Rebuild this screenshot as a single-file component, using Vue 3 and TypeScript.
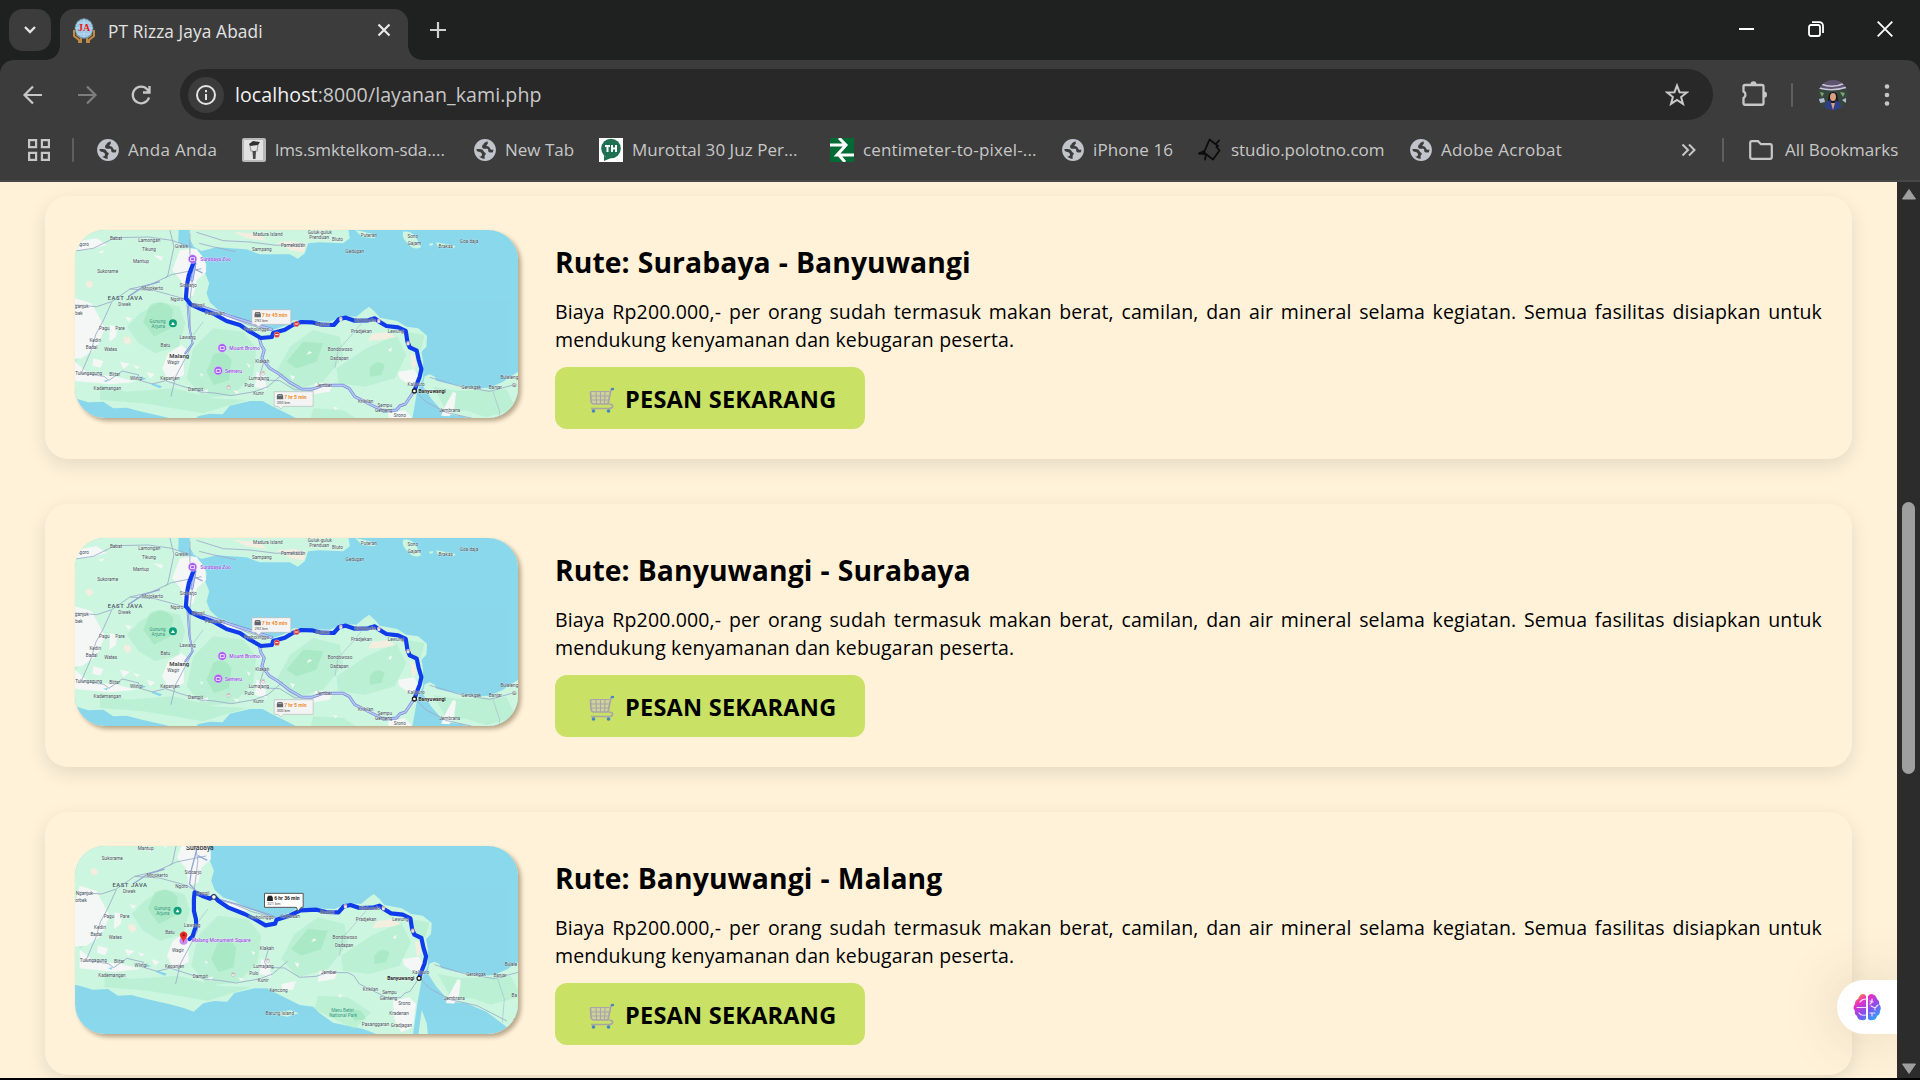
<script setup lang="ts">
interface Bookmark {
  icon: 'globe' | 'lms' | 'th' | 'cm' | 'polotno'
  label: string
  width: number
  spacing: number
}
type Label = [number, number, string, string?]

const bookmarks: Bookmark[] = [
  { icon: 'globe', label: 'Anda Anda', width: 145, spacing: 0.3 },
  { icon: 'lms', label: 'lms.smktelkom-sda....', width: 232, spacing: -0.08 },
  { icon: 'globe', label: 'New Tab', width: 125, spacing: 0 },
  { icon: 'th', label: 'Murottal 30 Juz Per...', width: 231, spacing: 0.05 },
  { icon: 'cm', label: 'centimeter-to-pixel-...', width: 232, spacing: 0.17 },
  { icon: 'globe', label: 'iPhone 16', width: 136, spacing: 0.12 },
  { icon: 'polotno', label: 'studio.polotno.com', width: 212, spacing: -0.06 },
  { icon: 'globe', label: 'Adobe Acrobat', width: 160, spacing: 0.26 },
]

const routes = [
  { title: 'Rute: Surabaya - Banyuwangi', malang: false },
  { title: 'Rute: Banyuwangi - Surabaya', malang: false },
  { title: 'Rute: Banyuwangi - Malang', malang: true },
]

// Town names shared by both map crops, in map units.
const towns: Label[] = [
  [243, 143, 'Mantup'], [143, 174, 'Sukorame'], [278, 224, 'Mojokerto'],
  [385, 215, 'Sidoarjo'], [351, 258, 'Ngoro'], [194, 272, 'Diwek'],
  [133, 346, 'Pagu'], [180, 346, 'Pare'], [106, 381, 'Kediri'], [95, 401, 'Badal'], [152, 409, 'Wates'],
  [383, 373, 'Lawang'], [316, 395, 'Batu'], [340, 448, 'Wagir'], [86, 480, 'Tulungagung'], [164, 482, 'Blitar'],
  [229, 495, 'Wlingi'], [330, 496, 'Kepanjen'], [142, 524, 'Kademangan'], [407, 528, 'Dampit'],
  [607, 443, 'Klakah'], [597, 496, 'Lumajang'], [568, 517, 'Pulo'], [596, 540, 'Kunir'],
  [415, 277, 'Bangil'], [590, 349, 'Probolinggo'], [788, 334, 'Besuki'], [915, 322, 'Situbondo'],
  [905, 355, 'Pradjekan'], [1008, 355, 'Lewung'], [841, 409, 'Bondowoso'], [839, 434, 'Dadapan'],
  [793, 515, 'Jember'], [918, 565, 'Krikilan'], [975, 575, 'Sempu'], [972, 592, 'Genteng'], [1020, 607, 'Srono'],
  [1069, 514, 'Kalipuro'], [1235, 521, 'Gerokgak'], [1307, 523, 'Banjar'],
  [1170, 592, 'Jembrana'],
]
const northTowns: Label[] = [
  [168, 75, 'Babat'], [268, 80, 'Lamongan'], [69, 93, 'ngoro'], [267, 107, 'Tikung'], [365, 100, 'Gresik'],
  [624, 64, 'Madura Island'], [606, 108, 'Sampang'], [700, 96, 'Pamekasan'], [780, 56, 'Guluk-guluk'],
  [778, 73, 'Prenduan'], [833, 79, 'Bluto'], [927, 65, 'Puteran'], [885, 114, 'Gedugan'], [1059, 70, 'Sono'],
  [1064, 90, 'Gajam'], [1158, 98, 'Brakas'], [1228, 83, 'Goa-daja'], [465, 299, 'Pasuruan'], [1364, 517, 'Gi'],
  [65, 280, 'ganjuk'], [57, 299, 'bek'], [1349, 492, 'Buleleng'],
]
const southTowns: Label[] = [
  [646, 638, 'Barung Island'], [1004, 637, 'Kradenan'], [933, 670, 'Pasanggaran'], [1011, 675, 'Gradjagan'],
  [677, 346, 'Kraksaan'], [1350, 583, 'Ba'], [1350, 663, 'T'], [642, 568, 'Kencong'],
  [59, 279, 'Nganjuk'], [49, 299, 'orbek'], [1340, 492, 'Bulele'],
]

const coastRoute =
  'M378 250 L392 268 L425 283 L465 298 L500 318 L540 330 L570 350 L603 369 L636 366 L640 354 L675 344 L700 329 L724 321 L756 322 L785 329 L822 330 L838 312 L858 308 L885 317 L925 316 L945 310 L958 320 L980 333 L1015 337 L1038 348 L1043 380 L1050 397 L1071 407 L1077 435 L1085 462 L1080 485 L1074 500 L1064 527'
const malangRoute =
  'M375 410 L384 402 L389 386 L395 370 L394 350 L388 325 L388 290 L390 270 L412 280 L437 289 L448 281 L462 296 L490 315 L540 335 L570 350 L603 369 L632 364 L636 352 L675 340 L708 324 L756 322 L785 329 L822 330 L838 312 L858 308 L885 317 L925 316 L945 310 L958 320 L980 333 L1015 337 L1038 348 L1043 380 L1050 397 L1071 407 L1077 435 L1085 462 L1080 485 L1074 500 L1064 527'
const southAlternative =
  'M598 368 L604 390 L613 405 L606 430 L630 460 L655 475 L690 502 L725 522 L755 523 L790 511 L850 511 L868 520 L885 545 L935 570 L973 589 L1010 585 L1020 573 L1037 567 L1064 527'
</script>

<template>
  <div class="window">
    <header class="tabstrip">
      <button class="tab-search">
        <svg width="14" height="10" viewBox="0 0 14 10"><path d="M2 2l5 5 5-5" fill="none" stroke="#e3e3e3" stroke-width="2.4" /></svg>
      </button>
      <div class="tab">
        <svg class="favicon" width="24" height="26" viewBox="0 0 24 26">
          <path d="M2 12v6l5 4v3M22 12v6l-5 4v3M4 16l5 4v5M20 16l-5 4v5" fill="none" stroke="#c08a45" stroke-width="2" />
          <ellipse cx="12" cy="10.500" rx="9" ry="9.800" fill="#9cc8e6" stroke="#6a8798" />
          <path d="M3 10h18M5 5h14M5 16h14M12 1v18" stroke="#c9e2f2" stroke-width=".7" />
          <text x="12" y="13" text-anchor="middle" class="fav-text">JA</text>
        </svg>
        <span class="tab-title">PT Rizza Jaya Abadi</span>
        <svg class="tab-close" width="14" height="14" viewBox="0 0 14 14"><path d="M1.500 1.500l11 11M12.500 1.500l-11 11" stroke="#e8e8e8" stroke-width="2.200" /></svg>
      </div>
      <svg class="new-tab" width="18" height="18" viewBox="0 0 18 18"><path d="M9 1v16M1 9h16" stroke="#d0d0d0" stroke-width="2.200" /></svg>
      <div class="controls">
        <svg width="16" height="16" viewBox="0 0 16 16"><path d="M0 8h15" stroke="#fff" stroke-width="2" /></svg>
        <svg width="16" height="16" viewBox="0 0 16 16" fill="none" stroke="#fff" stroke-width="1.800"><rect x="1" y="4" width="11" height="11" rx="2" /><path d="M4 1.200h7.500a3.500 3.500 0 013.500 3.500V12" /></svg>
        <svg width="16" height="16" viewBox="0 0 16 16"><path d="M.7.7l14.600 14.600M15.300.7L.7 15.300" stroke="#fff" stroke-width="1.800" /></svg>
      </div>
    </header>

    <div class="chrome-body">
      <div class="toolbar">
        <svg class="nav" width="24" height="24" viewBox="0 0 24 24" fill="none" stroke="#c7c7c7" stroke-width="2.200"><path d="M21 12H4M12 3.500L3.500 12l8.500 8.500" /></svg>
        <svg class="nav" width="24" height="24" viewBox="0 0 24 24" fill="none" stroke="#7d7d7d" stroke-width="2.200"><path d="M3 12h17M12 3.500l8.500 8.500-8.500 8.500" /></svg>
        <svg class="nav" width="24" height="24" viewBox="0 0 24 24" fill="none" stroke="#c7c7c7" stroke-width="2.300"><path d="M20 14.500A8.300 8.300 0 1118.300 6.500L20.500 9M20.500 3v6.500H14" /></svg>
        <div class="omnibox">
          <span class="info">
            <svg width="22" height="22" viewBox="0 0 22 22"><circle cx="11" cy="11" r="9" fill="none" stroke="#e3e3e3" stroke-width="2" /><path d="M11 10v6M11 6v2.200" stroke="#e3e3e3" stroke-width="2" /></svg>
          </span>
          <span class="url"><b>localhost</b>:8000/layanan_kami.php</span>
          <svg class="star" width="24" height="24" viewBox="0 0 24 24"><path d="M12 2.500l2.500 6.700 7.200.3-5.600 4.500 1.900 6.900-6-4-6 4L7.900 14 2.300 9.500l7.200-.3z" fill="none" stroke="#c9c9c9" stroke-width="2" /></svg>
        </div>
        <svg class="ext" width="28" height="30" viewBox="0 0 28 28" preserveAspectRatio="none"><path d="M5 6.500h17a1.500 1.500 0 011.500 1.500v15.500A1.500 1.500 0 0122 25H5a1.500 1.500 0 01-1.500-1.500v-4.700a3.500 3.500 0 000-6.300V8A1.500 1.500 0 015 6.500z" fill="none" stroke="#c7c7c7" stroke-width="2.300" /><path d="M10.500 6a3 3 0 016 0zM24 12.500a3 3 0 010 6z" fill="#c7c7c7" /></svg>
        <i class="divider"></i>
        <svg class="avatar" width="30" height="30" viewBox="0 0 30 30">
          <defs><clipPath id="avatarClip"><circle cx="15" cy="15" r="15" /></clipPath></defs>
          <g clip-path="url(#avatarClip)">
            <path d="M0 0h30v30H0z" fill="#35463e" />
            <path d="M0 0h30v9H0z" fill="#5d5570" />
            <path d="M3 4q12 5 24-1M1 8q14 4 28-1" fill="none" stroke="#cdc6dc" stroke-width="1.600" />
            <path d="M2 12l4 1-2 4zM22 12l5 1-2 4z" fill="#7fa66e" /><path d="M1 19l5-1 1 4-5 1zM24 20l4-2v5z" fill="#b4bdd0" />
            <path d="M11 14q4-4 8 0l2 12H9z" fill="#1c1518" />
            <ellipse cx="15" cy="17" rx="3" ry="4" fill="#d9a284" />
            <path d="M6 30l2-8 4-2 3 6 3-6 4 3 2 7z" fill="#2f3f86" /><path d="M13 23l2 7 2-7z" fill="#d8a08a" />
          </g>
        </svg>
        <svg class="dots" width="6" height="24" viewBox="0 0 6 24" fill="#c7c7c7"><circle cx="3" cy="3.500" r="2.300" /><circle cx="3" cy="12" r="2.300" /><circle cx="3" cy="20.500" r="2.300" /></svg>
      </div>

      <div class="bookmarks">
        <svg class="apps" width="22" height="22" viewBox="0 0 22 22" fill="none" stroke="#c7c7c7" stroke-width="2.200"><path d="M1.100 1.100h7v7h-7zM13.900 1.100h7v7h-7zM1.100 13.900h7v7h-7zM13.900 13.900h7v7h-7z" /></svg>
        <i class="divider"></i>
        <div class="bm-list">
          <div v-for="b in bookmarks" :key="b.label" class="bm" :style="{ width: b.width + 'px' }">
            <svg v-if="b.icon === 'globe'" width="22" height="24" viewBox="0 0 22 24"><circle cx="11" cy="12" r="10.900" fill="#c1c5cb" /><path d="M13.500 3.200C11 4 9.500 5 9.500 6.500 7.600 7 7.600 10.500 9.800 10.700l3.600.1c.8.100.8 1 .8 2 .1 1.500 1.500 1.700 3 1.700l1.800-.2.400-2.800c-1.800.6-2.800.3-3.200-.7C15.500 9 14.500 8 12.500 8c0-1 .5-1.500 1.400-1.900zM2.300 11.200c2.500-.4 5.200-.2 6.500.8 1 .9 1 2.200 2 2.500 1.200.4 1.200 1.500.5 2.300-.8.8-.8 1.600-.5 3.900-2 0-4-.9-5.700-2.300 2 .1 2.900-.5 2.900-2 0-1.700-2-2.400-3.400-2.600-1.200-.2-2.200-.9-2.300-2.600z" fill="#3c3c3c" /></svg>
            <svg v-else-if="b.icon === 'lms'" width="24" height="24" viewBox="0 0 24 24"><rect width="24" height="24" rx="2" fill="#b9b9b9" /><rect x="2" y="2" width="19" height="20" fill="#e2e2e2" /><path d="M7 6l4-3 7 1-2 3-8 1z" fill="#303030" /><path d="M8 8l1 5h2M16 7l-1 6h-2" fill="none" stroke="#999" stroke-width="1.200" /><path d="M10.500 13h3.500l-.5 8H11z" fill="#484848" /></svg>
            <svg v-else-if="b.icon === 'th'" width="24" height="24" viewBox="0 0 24 24"><path d="M0 0h24v24H0z" fill="#fff" /><circle cx="12" cy="10.500" r="9.800" fill="#1d7152" /><path d="M5 18v5l7-3z" fill="#1d7152" /><path d="M6 8h5M8.500 8v6M13 7v7M13 10.500h4M17 7v7" stroke="#fff" stroke-width="2" /></svg>
            <svg v-else-if="b.icon === 'cm'" width="24" height="24" viewBox="0 0 24 24"><path d="M0 0h24v24H0z" fill="#006b35" /><path d="M0 7h16M9 0l7 7-9 10h17M8 16l7 8" fill="none" stroke="#fff" stroke-width="3" /></svg>
            <svg v-else width="24" height="24" viewBox="0 0 24 24" fill="none" stroke="#0c0c0c" stroke-width="1.800" stroke-linecap="round" stroke-linejoin="round"><path d="M11.500 1.500L20 8l-1.500 1 3 3.500-6.500 9-9-7zM18 6l3-3.500M6 13l-5 2.500 7 .5-1 5.500" /></svg>
            <span :style="{ letterSpacing: b.spacing + 'px' }">{{ b.label }}</span>
          </div>
        </div>
        <svg class="more" width="15" height="14" viewBox="0 0 15 14"><path d="M1.500 1.500L7 7l-5.500 5.500M8 1.500L13.500 7 8 12.500" fill="none" stroke="#c7c7c7" stroke-width="2" /></svg>
        <i class="divider"></i>
        <svg class="folder" width="24" height="20" viewBox="0 0 24 20"><path d="M1.200 17V3q0-1.800 1.800-1.800h6l3 3h9q1.800 0 1.800 1.800v11q0 1.800-1.800 1.800H3q-1.800 0-1.800-1.800z" fill="none" stroke="#c7c7c7" stroke-width="2.200" /></svg>
        <span class="all">All Bookmarks</span>
      </div>
    </div>

    <div class="viewport">
      <main class="page">
        <article v-for="(route, index) in routes" :key="index" class="card">
          <svg class="map" width="443" height="188" :viewBox="route.malang ? '31 131 1330 564' : '45 45 1330 564'" preserveAspectRatio="none">
            <rect x="0" y="0" width="1400" height="760" fill="#8ad8eb" />
            <g class="land">
              <path d="M0 20H357L355 80L370 95L400 100L425 120L440 150L436 175L448 205L440 235L450 262L475 285L510 297L560 322L600 332L640 345L680 330L700 316L750 318L810 320L850 303L890 305L910 288L928 275L945 290L960 308L1012 318L1040 335L1075 340L1102 362L1100 395L1085 410L1090 440L1090 490L1072 530L1058 609L1046 695H936L896 680L806 661L766 633L746 613L706 608L680 595L640 575L608 558L570 558L510 572L488 598L450 596L416 603L387 628L360 618L316 606L246 590L200 578L160 580L130 560L85 562L45 550L0 540z" />
              <path d="M392 20H862L870 70L850 85L780 82L745 85L735 115L714 131L690 118L600 118L560 103L470 97L425 108L402 95L388 70z" />
              <path d="M886 45l20 20 40 5-5-12-30-8zM1030 50q20-4 36 12l18 35q-20 10-36-8-24-20-18-39zM1108 86l12-2-1 7-9 1zM1130 82l58 11-5 6-50-5z" />
              <path d="M1091 500L1095 484L1110 478L1125 485L1130 497L1160 505L1200 512L1250 520L1290 518L1330 500L1375 470V720L1326 673L1266 628L1206 603L1156 598L1116 553L1091 515z" />
              <path d="M1072 623l15 40 4 40h-30zM618 632l60-8 25 9-35 10z" />
            </g>
            <g class="forest">
              <path d="M240 295l60-35 60 15 16 50-20 70-70 20-50-30-35-50zM400 400l60-60 90 10 40 50-10 80-60 60-90 10-50-60zM650 470l40-75 70-50 80 20 10 60-60 75-90 25zM830 460l90-60 90-40 30 60-35 70-90 25-80-10zM1040 350l55 10-12 45-45-10zM1120 515l70 12 150-5 30 60-90 25-60-20-60 0z" />
              <path d="M50 295l40 0 8 90-55 60zM120 510l80 20 140-10 120 30 100 5-130 40-180-30-130-10zM760 580l90 5 70 45-50 50-120-60z" />
            </g>
            <g class="hills">
              <path d="M270 270q40-20 70 15l-8 55-50 25-32-45zM460 420q30-20 55 15l-8 60-45 15-22-40zM680 440l50-60 60 5-20 55-60 20zM930 460q20-30 45-10l-10 30-35 5zM850 620l40 5 15 25-35 5z" />
            </g>
            <g class="urban">
              <path d="M360 105l50-4 25 35 4 35-28 25-10 45-28 10-10-55-26-30zM45 250l50 15 40 75-25 60-45 30-65 5zM325 415l40-25 22 20-15 30 0 40-45 20-20-40zM45 440l40 35 85 10 60 15-80 8-105-10zM1015 470l48-7 17 28-10 20-25-3-27-20zM765 505l55 0-10 25-50 8zM985 595l50-10 20 20-10 70-35 15-20-40zM1180 530l9 4-5 45-15 25-25-2 12-28zM45 80l65-10 30 20-55 15-40 0zM590 470l25 10 5 45-35-10zM455 285l55 15 40 25-15 5-60-20z" />
              <path d="M250 135l15 5-8 10zM115 110l18-4-8 10zM280 120l30 5-6 12zM195 305l20 5-10 10zM425 530l20-8-4 15zM520 525l18 5-8 7zM220 450l20 5-9 8zM740 420l8-12 9 5zM690 480l15 4-6 12zM650 545l45-9-10 26-30 3zM560 445l12 5-5 9zM420 475l10 3-5 8zM985 405l12-8-4 14zM820 575l14 3-7 8zM150 330l22 6-4 30-20 14zM100 430l30 8-8 20-25-6zM180 440l30 6-20 16zM260 470l25 8-14 12z" />
              <path class="dry" d="M935 357l45-6 30 14-30 8-55 4zM1051 415l13 5 7 30-13 15zM78 200l14-3 8 13-10 10-11-6zM192 365l18 2 5 15-11 9-13-10zM520 50l80 8 20 20-60-8zM650 82l50-4 40 8-8 26-40-6z" />
            </g>
            <path class="lake" d="M275 504l32 10-7 6-24-10zM130 497l15-3-5 8zM235 483l25 8-12 3z" />
            <g class="roads">
              <path d="M45 108l55-8 65-32 100-2 70 10 60 20M330 45l12 50-18 85-8 10M390 55l0 60 10 60-10 80 1 90 8 40-20 40-32 60-14 60M45 270l65 5 45-15 55-38 65-15 60-28 90-18M210 222l75 5 80 22 22 12M155 262l-25 55-22 40-15 50-31 72M62 474l70 10 15 12 40-28 50 12-10 12 50 15 40-10 42 14 65 20 40 3 50 8 70-12 40-15 45-38M455 290l50 14 60 25 80 20M410 52l80 25 80 4 80 10 80-5M418 85l40 10 70 15M1068 530l30 30 60 32 80 18 90 46M1110 487l90 27 90 15 75-20M612 440l-12 40 10 15 50 2 45 28 50-3 35-11 60 0 18 9 17 25 50 25 38 19 37-4 10-12 17-6 27-40" />
              <path class="faint" d="M825 460l10-55 45-50 25-30M1300 530l20 60-6 70M430 320l-30 40" />
              <path class="major" d="M397 140l-16 60-6 45 18 20 40 17 90 25 110 37M300 200l-50 15-45 30M400 160l28 14" />
            </g>
            <g v-if="!route.malang">
              <path :d="southAlternative" class="alt-edge" /><path :d="southAlternative" class="alt" />
              <path class="alt-edge" d="M405 145l-9 50M405 268l120 40 110 35" /><path class="alt" d="M405 145l-9 50M405 268l120 40 110 35" />
              <path class="alt-edge thin" d="M383 265l5 70 10 50-22 30" /><path class="alt thin" d="M383 265l5 70 10 50-22 30" />
              <path class="blue" d="M402 140l-15 40-6 30-3 40" /><path :d="coastRoute" class="blue" />
            </g>
            <path v-else :d="malangRoute" class="blue" />

            <g class="names">
              <text v-for="[x, y, name] in towns" :key="name" :x="x" :y="y">{{ name }}</text>
              <text v-for="[x, y, name] in (route.malang ? southTowns : northTowns)" :key="name" :x="x" :y="y">{{ name }}</text>
            </g>
            <text class="region" x="196" y="254">EAST JAVA</text>
            <g class="park"><text x="293" y="324">Gunung</text><text x="295" y="339">Arjuna</text></g>
            <circle cx="339" cy="325" r="12" fill="#0e9f7a" /><path d="M333 330l6-10 6 10z" fill="#fff" />
            <g v-for="pin in [[843, 312], [957, 318], [1045, 385], [610, 475], [506, 517]]" :key="pin[0]">
              <rect :x="pin[0] - 4.500" :y="pin[1] - 6" width="9" height="12" rx="3" fill="#f1e9ea" stroke="#a09aa6" /><path :d="`M${pin[0] - 3} ${pin[1] - 3}h6`" stroke="#df7060" stroke-width="2" />
            </g>

            <template v-if="!route.malang">
              <g v-for="p in [[398, 132], [487, 399], [475, 467]]" :key="p[0]"><circle :cx="p[0]" :cy="p[1]" r="13" fill="#a45af0" stroke="#e7cfff" stroke-width="2" /><path :d="`M${p[0] - 6} ${p[1] - 4}h12v9h-12z`" fill="none" stroke="#fff" stroke-width="2.500" /></g>
              <g class="poi"><text x="467" y="139">Surabaya Zoo</text><text x="554" y="406">Mount Bromo</text><text x="521" y="474">Semeru</text></g>
              <text class="city" x="358" y="430">Malang</text>
              <g v-for="p in [[710, 327], [651, 359]]" :key="p[0]"><circle :cx="p[0]" :cy="p[1]" r="8.500" fill="#dc302d" stroke="#fff" /><path :d="`M${p[0] - 5} ${p[1]}h10`" stroke="#fff" stroke-width="3" /></g>
              <g v-for="box in [{ x: 576, y: 284, t: '7 hr 45 min', d: '292 km' }, { x: 643, y: 530, t: '7 hr 5 min', d: '300 km' }]" :key="box.x" :transform="`translate(${box.x} ${box.y})`">
                <path d="M0 0h117v44H28l-8 8-8-8H0z" fill="#f4f4f4" stroke="#b9b9b9" stroke-width="2" />
                <path d="M8 13l3-6h13l3 6v10H8zM8 14h19" fill="#606368" /><path d="M12 11h11" stroke="#ddd" stroke-width="2" />
                <text class="duration" x="30" y="21">{{ box.t }}</text><text class="distance" x="8" y="36">{{ box.d }}</text>
              </g>
              <circle cx="1064" cy="528" r="6" fill="#fff" stroke="#222" stroke-width="4" />
              <text class="place" x="1117" y="533">Banyuwangi</text>
            </template>
            <template v-else>
              <text class="city big" x="406" y="142">Surabaya</text>
              <g class="poi"><text x="470" y="419">Malang Monument Square</text></g>
              <circle cx="357" cy="415" r="12" fill="#c78bf5" />
              <path d="M357 422q-4-12-9-17a11 11 0 1118 0q-6 5-9 17z" fill="#e52d25" /><circle cx="357" cy="398" r="4" fill="#8e1712" />
              <circle cx="448" cy="284" r="7" fill="#fff" stroke="#333" stroke-width="3" />
              <g transform="translate(600 273)">
                <path d="M0 0h116v42h-6l-10 12-4-12H0z" fill="#fff" stroke="#555" stroke-width="3" />
                <path d="M8 13l3-6h11l3 6v10H8z" fill="#222" />
                <text class="duration dark" x="29" y="21">6 hr 36 min</text><text class="distance" x="8" y="36">321 km</text>
              </g>
              <g class="park"><text x="834" y="628">Meru Betiri</text><text x="836" y="643">National Park</text></g>
              <circle cx="1064" cy="528" r="6" fill="#fff" stroke="#222" stroke-width="4" />
              <text class="place" x="1009" y="533">Banyuwangi</text>
            </template>
          </svg>
          <div class="info-col">
            <h2>{{ route.title }}</h2>
            <p>Biaya Rp200.000,- per orang sudah termasuk makan berat, camilan, dan air mineral selama kegiatan. Semua fasilitas disiapkan untuk mendukung kenyamanan dan kebugaran peserta.</p>
            <button class="order">
              <svg width="26" height="26" viewBox="0 0 26 26" fill="none">
                <path d="M2 5h19l-2.500 12H5Q3 17 2.800 14z" fill="#cfc9c8" fill-opacity=".55" />
                <path d="M1.500 4.500h19M2 9h18M2.500 13h17M7 5l.5 12M11.500 5v12M16 5l-.5 12" stroke="#aaa4a8" stroke-width="1.100" />
                <path d="M1.500 4.500L2 14q.3 3 3 3h14L22 2.500h2M20 17q4 0 3.500 2.500Q23 21.500 20 21.500H2" stroke="#aaa3aa" stroke-width="1.700" />
                <path d="M22 2h3" stroke="#4a85bd" stroke-width="2.200" /><circle cx="4.500" cy="24" r="1.800" fill="#4485c7" /><circle cx="19.500" cy="24" r="1.800" fill="#4485c7" />
              </svg>
              <span>PESAN SEKARANG</span>
            </button>
          </div>
        </article>
        <div class="assistant">
          <svg width="28" height="27" viewBox="0 0 28 27">
            <defs><linearGradient id="brain" x1=".15" y1="0" x2=".85" y2="1"><stop offset="0" stop-color="#f7921e" /><stop offset=".25" stop-color="#e92fc2" /><stop offset=".6" stop-color="#8050f0" /><stop offset="1" stop-color="#1fb2ff" /></linearGradient></defs>
            <path d="M13 2v23q-2 2-5 1-3 0-4-4-3-2-2-5-3-3 0-7 0-4 3-5 2-5 5-5 2 0 3 2zM15 2q1-2 4-2 4 1 5 5 3 2 2 5 3 3 1 7 0 4-3 5-1 4-4 4-3 1-5-1z" fill="url(#brain)" />
            <path d="M13 5q-4 0-6 3M4 13.500h9M6 19q2 3 7 2M17 7l3 1M19 5v3l-2 2M18 12l4 2 3-3M22 14v2M17 19h5M19 19v3" fill="none" stroke="#f6ddff" stroke-width="1.200" stroke-linecap="round" />
          </svg>
        </div>
      </main>
      <aside class="scrollbar">
        <svg width="16" height="12" viewBox="0 0 16 12"><path d="M8 1.500L14.500 11h-13z" fill="#9f9f9f" stroke="#9f9f9f" stroke-linejoin="round" /></svg>
        <i class="thumb"></i>
        <svg width="16" height="12" viewBox="0 0 16 12"><path d="M8 10.500L14.500 1h-13z" fill="#9f9f9f" stroke="#9f9f9f" stroke-linejoin="round" /></svg>
      </aside>
    </div>
  </div>
</template>

<style>
body { margin: 0; overflow: hidden; background: #000; }
</style>

<style scoped>
* { box-sizing: border-box; }
svg { display: block; flex: none; }
button { border: 0; padding: 0; font: inherit; color: inherit; }
.window { width: 1920px; height: 1080px; display: flex; flex-direction: column; overflow: hidden; background: #000; font-family: "Open Sans", "Noto Sans", sans-serif; }
.tabstrip { height: 60px; flex: none; display: flex; background: #1f2120; padding: 9px 27px 0 9px; }
.tab-search { width: 42px; height: 42px; border-radius: 14px; background: #3c3c3c; display: grid; place-items: center; }
.tab { position: relative; width: 348px; height: 51px; margin-left: 9px; background: #3c3c3c; border-radius: 14px 14px 0 0; display: flex; align-items: flex-start; padding: 9px 17px 0 12px; }
.tab::before, .tab::after { content: ""; position: absolute; bottom: 0; width: 14px; height: 14px; }
.tab::before { left: -14px; background: radial-gradient(circle at 0 0, transparent 13.500px, #3c3c3c 14px); }
.tab::after { right: -14px; background: radial-gradient(circle at 100% 0, transparent 13.500px, #3c3c3c 14px); }
.fav-text { font: bold 10px "Liberation Serif", serif; fill: #f01414; }
.tab-title { margin: 2px 0 0 12px; font-size: 17.300px; line-height: 24px; letter-spacing: .1px; color: #e3e3e3; white-space: nowrap; }
.tab-close { margin: 5px 0 0 auto; }
.new-tab { margin: 12px 0 0 21px; }
.controls { margin-left: auto; display: flex; gap: 53px; padding-top: 12px; }
.chrome-body { height: 122px; flex: none; background: linear-gradient(#1f2120, #1f2120) top / 100% 14px no-repeat; }
.toolbar { height: 69px; background: #3c3c3c; border-radius: 14px 14px 0 0; display: flex; align-items: center; padding-left: 21px; }
.nav { margin-right: 30px; }
.omnibox { width: 1533px; height: 51px; margin: 0 0 0 -3px; border-radius: 26px; background: #282828; display: flex; align-items: center; padding: 0 24px 0 8px; }
.info { width: 36px; height: 36px; border-radius: 50%; background: #3c3c3c; display: grid; place-items: center; flex: none; }
.url { margin-left: 11px; font-size: 19.600px; line-height: 28px; letter-spacing: .06px; color: #c7c7c7; white-space: nowrap; }
.url b { font-weight: 400; color: #f1f1f1; }
.star { margin-left: auto; }
.ext { margin: -3px 0 0 27px; }
.divider { width: 2px; height: 24px; flex: none; background: #5f5f5f; border-radius: 1px; }
.toolbar .divider { margin-left: 23px; }
.avatar { margin-left: 25px; }
.dots { margin-left: 36px; }
.bookmarks { height: 53px; background: #3c3c3c; border-bottom: 2px solid #474747; display: flex; align-items: flex-start; padding: 9px 0 0 28px; color: #c7c7c7; font-size: 17px; line-height: 24px; white-space: nowrap; }
.apps { margin-top: 1px; }
.bookmarks > .divider { margin-left: 22px; }
.bm-list { width: 1584px; margin-left: 23px; display: flex; }
.bm { display: flex; flex: none; }
.bm span { margin-left: 9px; }
.more { margin-top: 5px; }
.more + .divider { margin-left: 26px !important; }
.folder { margin: 2px 0 0 25px; }
.all { margin-left: 12px; }
.viewport { height: 896px; display: flex; }
.page { position: relative; width: 1897px; height: 896px; overflow: hidden; background: #fff2d9; padding: 14px 45px 0; display: flex; flex-direction: column; gap: 45px; }
.card { height: 263px; flex: none; display: flex; align-items: flex-start; gap: 37px; padding: 34px 30px 0; border-radius: 23px; background: #fff2d9; box-shadow: 0 6px 20px rgba(0, 0, 0, .1); }
.map { border-radius: 30px; box-shadow: 3px 3px 4px rgba(60, 40, 0, .36); overflow: hidden; font-family: Roboto, sans-serif; }
.land { fill: #cdf6e0; }
.forest { fill: #aeeccb; opacity: .55; }
.hills { fill: #8fdcb0; opacity: .38; }
.urban { fill: #f4f7f5; }
.urban .dry { fill: #f3eedf; }
.lake { fill: #85d5ef; }
.roads { fill: none; stroke: #9caccb; stroke-width: 2.600; stroke-linejoin: round; }
.roads .major { stroke-width: 4; stroke: #93a7d3; }
.roads .faint { stroke-width: 1.500; }
.alt-edge, .alt, .blue { fill: none; stroke-linecap: round; stroke-linejoin: round; }
.alt-edge { stroke: #7488d4; stroke-width: 9; }
.alt { stroke: #b5c5f7; stroke-width: 5; }
.alt-edge.thin { stroke-width: 6; }
.alt.thin { stroke-width: 3; }
.blue { stroke: #103bea; stroke-width: 12.500; }
.names { font-size: 14px; text-anchor: middle; fill: #444d59; stroke: #fff; stroke-width: 2px; stroke-opacity: .5; paint-order: stroke; }
.region { font-size: 17.500px; letter-spacing: 1.800px; font-weight: 500; text-anchor: middle; fill: #4a5562; }
.city { font-size: 18px; font-weight: 500; text-anchor: middle; fill: #333; }
.city.big { font-size: 20px; }
.park { font-size: 14px; text-anchor: middle; fill: #3a9a84; }
.poi { font-size: 15px; text-anchor: middle; fill: #a04be8; font-weight: 500; stroke: #fff; stroke-width: 2px; stroke-opacity: .6; paint-order: stroke; }
.duration { font-size: 15px; font-weight: 700; fill: #ee8c2c; }
.duration.dark { fill: #222; }
.distance { font-size: 12px; fill: #444; }
.place { font-size: 15px; font-weight: 700; text-anchor: middle; fill: #222; stroke: #fff; stroke-width: 2px; stroke-opacity: .7; paint-order: stroke; }
.info-col { flex: 1; margin-top: 12px; color: #000; }
h2 { margin: 0; font-size: 28.300px; line-height: 40px; font-weight: 700; letter-spacing: .08px; word-spacing: .6px; white-space: nowrap; }
p { margin: 16px 0 13px; font-size: 19.500px; line-height: 28px; letter-spacing: .14px; text-align: justify; }
.order { width: 310px; height: 62px; border-radius: 12px; background: #c9e265; display: flex; align-items: center; padding-left: 34px; font-size: 23.500px; font-weight: 700; letter-spacing: .24px; white-space: nowrap; }
.order svg { margin-top: 3px; }
.order span { margin: 2px 0 0 10px; }
.assistant { position: absolute; right: 0; top: 798px; width: 60px; height: 54px; border-radius: 27px 0 0 27px; background: #fff; box-shadow: 0 0 60px rgba(80, 60, 0, .18); display: flex; align-items: center; padding-left: 16px; }
.scrollbar { width: 23px; background: #2c2c2c; display: flex; flex-direction: column; align-items: center; padding: 6px 0 3px; }
.thumb { width: 13px; height: 272px; margin: 302px 0 auto; border-radius: 7px; background: #9f9f9f; }
</style>
